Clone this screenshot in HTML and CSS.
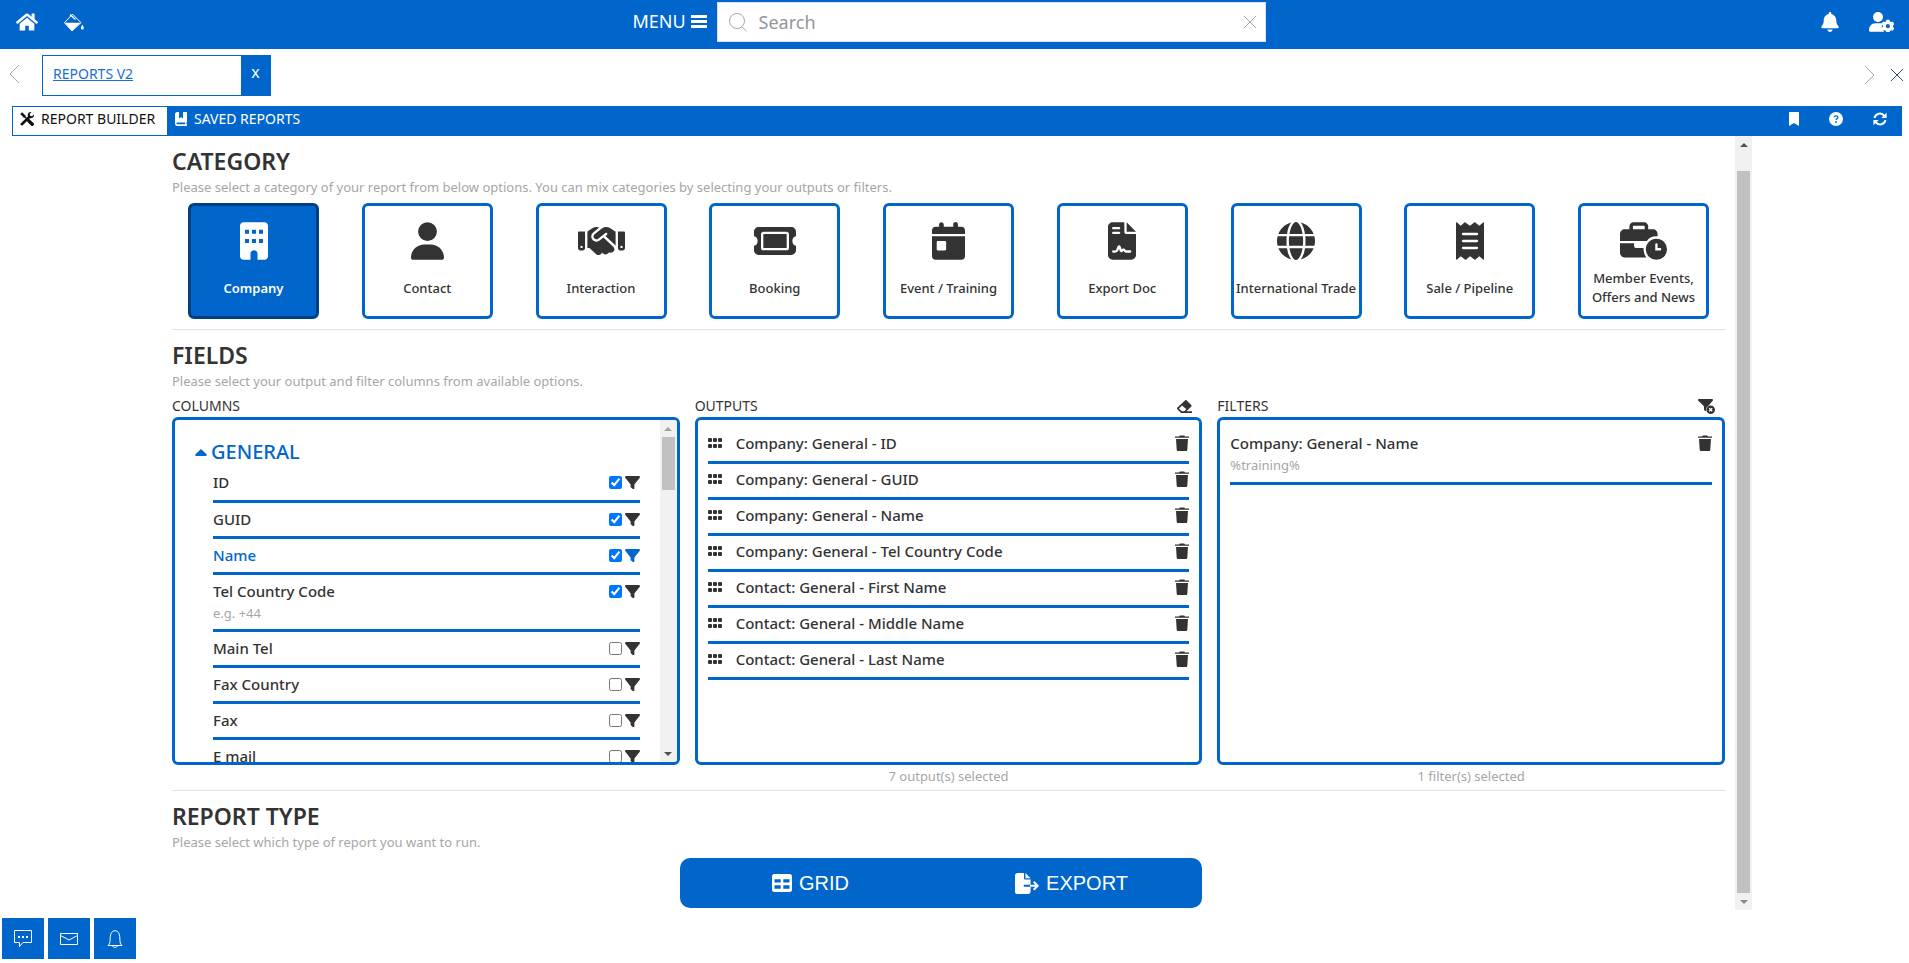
FILE: index.html
```html
<!DOCTYPE html>
<html lang="en">
<head>
<meta charset="utf-8">
<title>Reports V2</title>
<link rel="stylesheet" href="styles.css">
</head>
<body>
<svg class="sprite" aria-hidden="true">
  <symbol id="i-filter" viewBox="0 0 512 512"><path d="M3.9 54.9C10.5 40.9 24.5 32 40 32H472c15.500 0 29.500 8.900 36.100 22.900s4.600 30.500-5.200 42.500L320 320.900V448c0 12.100-6.800 23.200-17.700 28.600s-23.800 4.300-33.500-3l-64-48c-8.100-6-12.800-15.500-12.800-25.600V320.900L9 97.300C-.7 85.400-2.800 68.800 3.900 54.900z"/></symbol>
  <symbol id="i-trash" viewBox="0 0 14 16"><path d="M0 1.500h4L4.800.4h4.400L10 1.500h4v1.300H0zM1 4h12l-.7 10.700c-.1.800-.6 1.300-1.300 1.300H3c-.7 0-1.200-.5-1.300-1.300z"/></symbol>
  <symbol id="i-grip" viewBox="0 0 14 10"><path d="M1 0h2a1 1 0 0 1 1 1v2a1 1 0 0 1-1 1H1a1 1 0 0 1-1-1V1a1 1 0 0 1 1-1zM6 0h2a1 1 0 0 1 1 1v2a1 1 0 0 1-1 1H6a1 1 0 0 1-1-1V1a1 1 0 0 1 1-1zM11 0h2a1 1 0 0 1 1 1v2a1 1 0 0 1-1 1h-2a1 1 0 0 1-1-1V1a1 1 0 0 1 1-1zM1 6h2a1 1 0 0 1 1 1v2a1 1 0 0 1-1 1H1a1 1 0 0 1-1-1V7a1 1 0 0 1 1-1zM6 6h2a1 1 0 0 1 1 1v2a1 1 0 0 1-1 1H6a1 1 0 0 1-1-1V7a1 1 0 0 1 1-1zM11 6h2a1 1 0 0 1 1 1v2a1 1 0 0 1-1 1h-2a1 1 0 0 1-1-1V7a1 1 0 0 1 1-1z"/></symbol>
  <symbol id="i-bell" viewBox="0 0 448 512"><path d="M224 0c-17.700 0-32 14.300-32 32V51.200C119 66 64 130.600 64 208v18.800c0 47-17.300 92.400-48.500 127.600l-7.400 8.300c-8.400 9.400-10.400 22.900-5.300 34.400S19.400 416 32 416H416c12.600 0 24-7.400 29.200-18.900s3.100-25-5.300-34.400l-7.400-8.300C401.300 319.200 384 273.900 384 226.800V208c0-77.400-55-142-128-156.800V32c0-17.700-14.300-32-32-32zm45.300 493.300c12-12 18.700-28.300 18.700-45.300H160c0 17 6.700 33.300 18.700 45.300s28.300 18.700 45.300 18.700s33.300-6.700 45.300-18.700z"/></symbol>
</svg>

<header class="topbar">
  <div class="topbar-group">
    <button class="icon-btn" aria-label="Home"><svg width="22" height="20" viewBox="0 0 576 512"><path d="M280.370 148.260L96 300.110V464a16 16 0 0 0 16 16l112.060-.29a16 16 0 0 0 15.920-16V368a16 16 0 0 1 16-16h64a16 16 0 0 1 16 16v95.640a16 16 0 0 0 16 16.050L464 480a16 16 0 0 0 16-16V300L295.670 148.260a12.190 12.190 0 0 0-15.300 0zM571.600 251.470L488 182.560V44.050a12 12 0 0 0-12-12h-56a12 12 0 0 0-12 12v72.610L318.470 43a48 48 0 0 0-61 0L4.340 251.470a12 12 0 0 0-1.600 16.900l25.500 31A12 12 0 0 0 45.150 301l235.220-193.740a12.190 12.190 0 0 1 15.300 0L530.900 301a12 12 0 0 0 16.900-1.600l25.500-31a12 12 0 0 0-1.700-16.930z"/></svg></button>
    <button class="icon-btn" aria-label="Theme colours"><svg width="20" height="19" viewBox="0 0 20 19"><path d="M8.500 1.200 17 9.700 8 18 .4 9.700z" fill="none" stroke="#fff" stroke-width="1"/><path d="M.8 9.700h15.700L8 17.800zM18.300 11.500c1 1.800 1.500 2.800 1.500 3.600a1.500 1.500 0 0 1-3 0c0-.8.500-1.800 1.500-3.600z"/><path d="M6 1.500l5.500 5" fill="none" stroke="#fff" stroke-width="1.300"/></svg></button>
  </div>
  <div class="topbar-center">
    <button class="menu-btn">MENU <svg width="16" height="15" viewBox="0 0 16 15"><path d="M0 1h16v3H0zM0 6h16v3H0zM0 11h16v3H0z"/></svg></button>
    <div class="search">
      <svg width="20" height="20" viewBox="0 0 20 20"><circle cx="9" cy="9" r="7.500"/><path d="M14 15l4.500 4"/></svg>
      <input type="text" placeholder="Search" aria-label="Search">
      <button class="clear-btn" aria-label="Clear search"><svg width="14" height="14" viewBox="0 0 14 14"><path d="M1 1l12 12M13 1L1 13"/></svg></button>
    </div>
  </div>
  <div class="topbar-group end">
    <button class="icon-btn" aria-label="Notifications"><svg width="18" height="20"><use href="#i-bell"/></svg></button>
    <button class="icon-btn last" aria-label="User settings"><svg width="25" height="20" viewBox="0 0 25 20"><circle cx="9" cy="5" r="5"/><path d="M0 18c0-4 2.800-6.800 6.500-6.800h5c.8 0 1.500.1 2 .4-.8 1.400-1 4-.2 5.500.4 1 1.100 1.900 2 2.700H1.500C.6 19.800 0 19 0 18z"/><path fill-rule="evenodd" d="M17.400 7.700h3l.5 1.700 1.200.7 1.700-.5 1.500 2.600-1.300 1.300v1.400l1.300 1.300-1.500 2.600-1.700-.5-1.200.7-.5 1.400h-3l-.5-1.400-1.200-.7-1.700.5-1.500-2.600 1.300-1.300v-1.400l-1.300-1.300 1.500-2.600 1.700.5 1.200-.7zm1.500 4.400a2.100 2.100 0 1 0 0 4.200 2.100 2.100 0 0 0 0-4.200z"/></svg></button>
  </div>
</header>

<nav class="tabstrip" aria-label="Open pages">
  <button class="plain" aria-label="Previous tab"><svg class="line" width="12" height="20" viewBox="0 0 12 20"><path d="M11 1L2 10l9 9"/></svg></button>
  <div class="page-tab"><a href="#">REPORTS V2</a><button aria-label="Close tab">X</button></div>
  <div class="tabstrip-end">
    <button class="plain" aria-label="Next tab"><svg class="line" width="12" height="20" viewBox="0 0 12 20"><path d="M1 1l9 9-9 9"/></svg></button>
    <button class="plain" aria-label="Close all"><svg class="line dark" width="14" height="14" viewBox="0 0 14 14"><path d="M1 1l12 12M13 1L1 13"/></svg></button>
  </div>
</nav>

<div class="toolbar">
  <button class="tool-tab active"><svg width="14" height="14" viewBox="0 0 14 14"><path d="M1.200 1.200 5 5" stroke="#111" stroke-width="2.600"/><path d="M4 4l4.500 4.500" stroke="#111" stroke-width="1.400"/><path d="M8.600 8.600l3.600 3.600" stroke="#111" stroke-width="3.400" stroke-linecap="round"/><path d="M1.800 12.200 9.500 4.700" stroke="#111" stroke-width="2.600" stroke-linecap="round"/><path d="M11.500 0 9.700 2l.4 1.900 1.900.4L14 2.500c.3 2.500-1.700 4.200-4 3.700L7.800 4C7.300 1.800 9-.3 11.500 0z"/></svg>REPORT BUILDER</button>
  <button class="tool-tab"><svg width="12" height="14" viewBox="0 0 12 14"><path fill-rule="evenodd" d="M2.200 0H4v6.500l2-1.400 2 1.400V0h3.200c.5 0 .8.300.8.800v9c0 .4-.2.600-.5.800v1.700c.4.100.5.300.5.700v.3c0 .4-.3.700-.7.700H2.200A2.200 2.200 0 0 1 0 11.800V2.200C0 1 1 0 2.200 0zm0 10.600c-1 0-1 1.700 0 1.700h7.900v-1.700z"/></svg>SAVED REPORTS</button>
  <div class="toolbar-end">
    <button class="icon-btn" aria-label="Bookmark"><svg width="10" height="14" viewBox="0 0 10 14"><path d="M0 1c0-.6.400-1 1-1h8c.6 0 1 .4 1 1v13l-5-3-5 3z"/></svg></button>
    <button class="icon-btn" aria-label="Help"><svg width="14" height="14" viewBox="0 0 14 14"><circle cx="7" cy="7" r="7"/><path d="M5.200 5.300c0-2 3.700-2 3.700.1 0 1.200-1.800 1.200-1.800 2.500" fill="none" stroke="#0066cc" stroke-width="1.300"/><circle cx="7" cy="10" r=".9" fill="#0066cc"/></svg></button>
    <button class="icon-btn" aria-label="Refresh"><svg width="14" height="14" viewBox="0 0 14 14"><path d="M1.500 6A5.500 5.500 0 0 1 11.300 3.800M12.500 8A5.500 5.500 0 0 1 2.700 10.200" fill="none" stroke="#fff" stroke-width="2"/><path d="M13.600.8v5.300H8.300zM.4 13.200V7.900h5.300z"/></svg></button>
  </div>
</div>

<div class="scroller">
<main class="content">
  <section class="block">
    <h2>CATEGORY</h2>
    <p class="hint">Please select a category of your report from below options. You can mix categories by selecting your outputs or filters.</p>
    <div class="cards">
      <button class="card selected"><svg width="28" height="38" viewBox="0 0 384 512"><path fill-rule="evenodd" d="M48 0h288c26 0 48 22 48 48v416c0 26-22 48-48 48h-96v-80c0-27-21-48-48-48s-48 21-48 48v80H48c-26 0-48-22-48-48V48C0 22 22 0 48 0zM68 102v54h56v-54zm96 0v54h56v-54zm96 0v54h56v-54zM68 228v54h56v-54zm96 0v54h56v-54zm96 0v54h56v-54z"/></svg><span>Company</span></button>
      <button class="card"><svg width="33" height="38" viewBox="0 0 448 512"><path d="M224 256A128 128 0 1 0 224 0a128 128 0 1 0 0 256zm-45.700 48C79.800 304 0 383.800 0 482.300C0 498.700 13.300 512 29.700 512H418.300c16.400 0 29.700-13.300 29.700-29.700C448 383.800 368.200 304 269.700 304H178.300z"/></svg><span>Contact</span></button>
      <button class="card"><svg width="47" height="38" viewBox="0 0 640 512"><path d="M323.400 85.200l-96.800 78.400c-16.100 13-19.200 36.400-7 53.100c12.900 17.800 38 21.300 55.300 7.800l99.300-77.200c7-5.400 17-4.200 22.500 2.800s4.200 17-2.800 22.500l-20.900 16.200L512 316.800V128h-.7l-3.900-2.500L434.800 79c-15.300-9.800-33.200-15-51.400-15c-21.800 0-43 7.500-60 21.200zm22.800 124.400l-51.700 40.200C263 274.300 217.300 268 193.700 235.600c-22.200-30.500-16.600-73.100 12.700-96.800l83.200-67.300c-11.600-4.900-24.100-7.400-36.800-7.400C234 64 215.700 69.600 200 80l-72 48V352h28.200l91.400 83.400c19.600 17.900 49.900 16.500 67.800-3.100c5.500-6.100 9.200-13.200 11.100-20.600l17 15.600c19.500 17.900 49.900 16.600 67.800-2.900c4.500-4.900 7.800-10.600 9.900-16.500c19.400 13 45.800 10.300 62.100-7.500c17.900-19.500 16.600-49.900-2.900-67.800l-134.200-123zM16 128c-8.800 0-16 7.200-16 16V352c0 17.700 14.300 32 32 32H64c17.700 0 32-14.300 32-32V128H16zM48 320a16 16 0 1 1 0 32 16 16 0 1 1 0-32zM544 128V352c0 17.700 14.300 32 32 32h32c17.700 0 32-14.300 32-32V144c0-8.800-7.200-16-16-16H544zm32 208a16 16 0 1 1 32 0 16 16 0 1 1 -32 0z"/></svg><span>Interaction</span></button>
      <button class="card"><svg width="42" height="38" viewBox="0 0 576 512"><path fill-rule="evenodd" d="M64 64h448c35 0 64 29 64 64v64c-66 0-66 128 0 128v64c0 35-29 64-64 64H64c-35 0-64-29-64-64v-64c66 0 66-128 0-128v-64c0-35 29-64 64-64zm64 64c-18 0-32 14-32 32v192c0 18 14 32 32 32h320c18 0 32-14 32-32V160c0-18-14-32-32-32zm0 32h320v192H128z"/></svg><span>Booking</span></button>
      <button class="card"><svg width="33" height="38" viewBox="0 0 448 512"><path fill-rule="evenodd" d="M128 0c18 0 32 14 32 32v32h128V32c0-43 64-43 64 0v32h48c27 0 48 21 48 48v48H0v-48c0-27 21-48 48-48h48V32c0-18 14-32 32-32zM0 192h448v272c0 27-21 48-48 48H48c-27 0-48-21-48-48zm80 64c-9 0-16 7-16 16v96c0 9 7 16 16 16h96c9 0 16-7 16-16v-96c0-9-7-16-16-16z"/></svg><span>Event / Training</span></button>
      <button class="card"><svg width="28" height="38" viewBox="0 0 384 512"><path d="M64 0h160v128c0 18 14 32 32 32h128v288c0 35-29 64-64 64H64c-35 0-64-29-64-64V64C0 29 29 0 64 0zm192 0 128 128H256z"/><path d="M72 80h80M72 144h80M72 400c54 6 58-20 74-66 10-8 14 0 22 28 6 34 12 38 24 26 14-18 30-22 40 6 3 6 8 6 16 6h56" fill="none" stroke="#fff" stroke-width="32" stroke-linecap="round"/></svg><span>Export Doc</span></button>
      <button class="card"><svg width="38" height="38" viewBox="0 0 512 512"><path d="M352 256c0 22.200-1.200 43.600-3.300 64H163.300c-2.200-20.400-3.300-41.800-3.300-64s1.200-43.600 3.300-64H348.700c2.200 20.400 3.300 41.800 3.300 64zm28.800-64H503.900c5.300 20.500 8.100 41.900 8.100 64s-2.800 43.500-8.100 64H380.800c2.100-20.600 3.200-42 3.200-64s-1.100-43.400-3.200-64zm112.600-32H376.700c-10-63.900-29.800-117.400-55.300-151.600c78.300 20.700 142 77.500 171.900 151.600zm-149.100 0H167.700c6.100-36.400 15.500-68.600 27-94.700c10.500-23.600 22.200-40.700 33.500-51.500C239.400 3.200 248.700 0 256 0s16.600 3.200 27.800 13.800c11.300 10.800 23 27.900 33.500 51.500c11.600 26 20.900 58.200 27 94.700zm-209 0H18.600C48.600 85.900 112.200 29.100 190.600 8.400C165.100 42.600 145.300 96.100 135.300 160zM8.100 192H131.200c-2.100 20.600-3.200 42-3.200 64s1.100 43.400 3.200 64H8.100C2.800 299.500 0 278.100 0 256s2.800-43.500 8.100-64zM194.700 446.600c-11.600-26-20.900-58.200-27-94.600H344.300c-6.100 36.400-15.500 68.600-27 94.600c-10.500 23.600-22.200 40.700-33.500 51.500C272.600 508.800 263.300 512 256 512s-16.600-3.200-27.800-13.800c-11.300-10.800-23-27.900-33.500-51.500zM135.300 352c10 63.900 29.800 117.400 55.300 151.600C112.200 482.900 48.600 426.100 18.600 352H135.300zm358.100 0c-30 74.100-93.600 130.900-171.900 151.600c25.500-34.200 45.200-87.700 55.300-151.600H493.400z"/></svg><span>International Trade</span></button>
      <button class="card"><svg width="28" height="38" viewBox="0 0 384 512"><path d="M0 8c0-8 8-10 14-5l50 43 48-41c6-6 14-6 20 0l60 41 56-43c5-4 11-4 16 0l56 43L372 3c6-5 12-3 12 5v496c0 8-6 10-12 5l-52-43-52 43c-5 4-11 4-16 0l-60-43-52 43c-5 4-12 4-17 0l-59-43-50 43c-6 5-14 3-14-5z"/><path d="M96 160h192M96 256h192M96 352h192" stroke="#fff" stroke-width="32" stroke-linecap="round"/></svg><span>Sale / Pipeline</span></button>
      <button class="card"><svg width="47" height="38" viewBox="0 0 640 512"><path fill-rule="evenodd" d="M184 0h144c31 0 56 25 56 56v40h64c35 0 64 29 64 64v33c-66-8-120 20-146 63H0v-96c0-35 29-64 64-64h64V56c0-31 25-56 56-56zm0 48c-5 0-8 3-8 8v40h160V56c0-5-3-8-8-8z"/><path d="M0 288h192v32c0 18 14 32 32 32h96c0 47 10 90 38 128H64c-35 0-64-29-64-64z"/><circle cx="496" cy="368" r="144"/><path d="M496 304v64h50" fill="none" stroke="#fff" stroke-width="32" stroke-linecap="round"/></svg><span>Member Events, Offers and News</span></button>
    </div>
  </section>

  <section class="block">
    <h2>FIELDS</h2>
    <p class="hint">Please select your output and filter columns from available options.</p>
    <div class="panels">
      <div class="panel">
        <div class="panel-head"><h3>COLUMNS</h3></div>
        <div class="box with-scroll">
          <div class="columns-list">
            <button class="group-title"><svg width="12" height="7" viewBox="0 0 12 7"><path d="M6 0l5.500 5.300c.5.700.3 1.700-.8 1.700H1.300C.2 7 0 6 .5 5.300z"/></svg>GENERAL</button>
            <ul>
              <li><label for="c1">ID</label><input type="checkbox" id="c1" checked><button class="plain" aria-label="Filter ID"><svg width="15" height="15"><use href="#i-filter"/></svg></button></li>
              <li><label for="c2">GUID</label><input type="checkbox" id="c2" checked><button class="plain" aria-label="Filter GUID"><svg width="15" height="15"><use href="#i-filter"/></svg></button></li>
              <li class="on"><label for="c3">Name</label><input type="checkbox" id="c3" checked><button class="plain" aria-label="Filter Name"><svg width="15" height="15"><use href="#i-filter"/></svg></button></li>
              <li><label for="c4">Tel Country Code</label><input type="checkbox" id="c4" checked><button class="plain" aria-label="Filter Tel Country Code"><svg width="15" height="15"><use href="#i-filter"/></svg></button><small>e.g. +44</small></li>
              <li><label for="c5">Main Tel</label><input type="checkbox" id="c5"><button class="plain" aria-label="Filter Main Tel"><svg width="15" height="15"><use href="#i-filter"/></svg></button></li>
              <li><label for="c6">Fax Country</label><input type="checkbox" id="c6"><button class="plain" aria-label="Filter Fax Country"><svg width="15" height="15"><use href="#i-filter"/></svg></button></li>
              <li><label for="c7">Fax</label><input type="checkbox" id="c7"><button class="plain" aria-label="Filter Fax"><svg width="15" height="15"><use href="#i-filter"/></svg></button></li>
              <li><label for="c8">E mail</label><input type="checkbox" id="c8"><button class="plain" aria-label="Filter E mail"><svg width="15" height="15"><use href="#i-filter"/></svg></button></li>
            </ul>
          </div>
          <div class="scrollbar small" aria-hidden="true"><i class="arrow up faded"></i><i class="thumb"></i><i class="arrow down"></i></div>
        </div>
      </div>
      <div class="panel">
        <div class="panel-head"><h3>OUTPUTS</h3><button class="plain" aria-label="Clear outputs"><svg width="15" height="13" viewBox="0 0 15 13"><path fill-rule="evenodd" d="M8 .4c.5-.5 1.200-.5 1.700 0l4.500 4.500c.5.500.5 1.200 0 1.700L9.500 11.200H15V13H4L.4 9.300c-.5-.5-.5-1.200 0-1.700zM5 5.500l-3 2.900 2.700 2.800h2.500l2.200-2z"/></svg></button></div>
        <div class="box">
          <ul class="picked">
            <li><svg width="14" height="10"><use href="#i-grip"/></svg><span>Company: General - ID</span><button class="plain" aria-label="Remove"><svg width="14" height="16"><use href="#i-trash"/></svg></button></li>
            <li><svg width="14" height="10"><use href="#i-grip"/></svg><span>Company: General - GUID</span><button class="plain" aria-label="Remove"><svg width="14" height="16"><use href="#i-trash"/></svg></button></li>
            <li><svg width="14" height="10"><use href="#i-grip"/></svg><span>Company: General - Name</span><button class="plain" aria-label="Remove"><svg width="14" height="16"><use href="#i-trash"/></svg></button></li>
            <li><svg width="14" height="10"><use href="#i-grip"/></svg><span>Company: General - Tel Country Code</span><button class="plain" aria-label="Remove"><svg width="14" height="16"><use href="#i-trash"/></svg></button></li>
            <li><svg width="14" height="10"><use href="#i-grip"/></svg><span>Contact: General - First Name</span><button class="plain" aria-label="Remove"><svg width="14" height="16"><use href="#i-trash"/></svg></button></li>
            <li><svg width="14" height="10"><use href="#i-grip"/></svg><span>Contact: General - Middle Name</span><button class="plain" aria-label="Remove"><svg width="14" height="16"><use href="#i-trash"/></svg></button></li>
            <li><svg width="14" height="10"><use href="#i-grip"/></svg><span>Contact: General - Last Name</span><button class="plain" aria-label="Remove"><svg width="14" height="16"><use href="#i-trash"/></svg></button></li>
          </ul>
        </div>
        <p class="count">7 output(s) selected</p>
      </div>
      <div class="panel">
        <div class="panel-head"><h3>FILTERS</h3><button class="plain" aria-label="Clear filters"><svg width="17" height="15" viewBox="0 0 17 15"><path d="M1 0h13c1 0 1.300 1 .7 1.700L10.500 6.800C8.500 7.800 7.600 10 8.200 12.500L6 11V7.200L.3 1.700C-.3 1 0 0 1 0z"/><circle cx="12.700" cy="10.700" r="4.300"/><path d="M11.200 9.200l3 3M14.200 9.200l-3 3" stroke="#fff" stroke-width="1.300"/></svg></button></div>
        <div class="box">
          <ul class="picked">
            <li><span>Company: General - Name</span><button class="plain" aria-label="Remove"><svg width="14" height="16"><use href="#i-trash"/></svg></button><small>%training%</small></li>
          </ul>
        </div>
        <p class="count">1 filter(s) selected</p>
      </div>
    </div>
  </section>

  <section class="block">
    <h2>REPORT TYPE</h2>
    <p class="hint">Please select which type of report you want to run.</p>
    <div class="actions">
      <button><svg width="20" height="18" viewBox="0 0 20 18"><path fill-rule="evenodd" d="M2.500 0h15A2.500 2.500 0 0 1 20 2.500v13a2.500 2.500 0 0 1-2.500 2.500h-15A2.500 2.500 0 0 1 0 15.500v-13A2.500 2.500 0 0 1 2.500 0zm0 5.300v3.200h6.200V5.300zm8.800 0v3.200h6.200V5.300zm-8.800 5.900v3.500h6.200v-3.500zm8.800 0v3.500h6.200v-3.500z"/></svg>GRID</button>
      <button><svg width="24" height="21" viewBox="0 0 24 21"><path d="M2.600 0H9v5.200c0 .8.600 1.400 1.400 1.400h5.200v5.200H8.800v2h6.800v4.600c0 1.400-1.200 2.600-2.600 2.600H2.600A2.600 2.600 0 0 1 0 18.400V2.600C0 1.200 1.200 0 2.600 0zm7.800 0 5.200 5.300h-5.200z"/><path d="M15 12.800h7M18.700 8.800l4 4-4 4" fill="none" stroke="#fff" stroke-width="2"/></svg>EXPORT</button>
    </div>
  </section>
</main>
<div class="scrollbar" aria-hidden="true"><i class="arrow up"></i><i class="thumb"></i><i class="arrow down faded"></i></div>
</div>

<footer class="dock">
  <button aria-label="Chat"><svg width="18" height="18" viewBox="0 0 18 18"><path d="M.5.500h17v12H9l-3.500 4v-4h-5z"/><path d="M4 7h2M8 7h2M12 7h2" stroke-width="2"/></svg></button>
  <button aria-label="Mail"><svg width="18" height="12" viewBox="0 0 18 12"><path d="M.5.500h17v11H.500zM.5 2.500L9 7l8.500-4.500"/></svg></button>
  <button aria-label="Alerts"><svg width="16" height="18" viewBox="0 0 16 18"><path d="M1 15.500c2-1.500 2-4 2.200-7.500C3.400 3.500 5 .7 8 .7s4.600 2.800 4.800 7.300c.2 3.500.2 6 2.200 7.500zM5.500 15.500c.3 2.600 4.700 2.600 5 0"/></svg></button>
</footer>
</body>
</html>
```
FILE: styles.css
```css
:root {
  --blue: #0066cc;
  --ink: #333;
  --muted: #a6a6a6;
  --sans: "Noto Sans", "Open Sans", sans-serif;
}

* { box-sizing: border-box; }

body {
  margin: 0;
  min-height: 100vh;
  display: flex;
  flex-direction: column;
  background: #fff;
  color: var(--ink);
  font-family: var(--sans);
  font-size: 13px;
  line-height: 18px;
}

.sprite { display: none; }
h2, h3, p, ul { margin: 0; padding: 0; }
ul { list-style: none; }
button { font: inherit; color: inherit; border: 0; padding: 0; background: none; cursor: pointer; }
svg { display: block; fill: currentColor; flex: none; }

/* Top bar */
.topbar {
  display: grid;
  grid-template-columns: 1fr auto 1fr;
  height: 49px;
  padding: 0 15px 0 4px;
  background: var(--blue);
  color: #fff;
}
.topbar-group { display: flex; align-items: center; padding-bottom: 5px; }
.topbar-group .icon-btn { padding: 0 12px; }
.topbar-group .icon-btn + .icon-btn { padding-left: 14px; }
.topbar-group.end { justify-content: flex-end; gap: 4px; }
.topbar-group.end .last { padding-right: 0; }
.topbar-center { display: flex; align-items: flex-start; gap: 10px; padding-top: 2px; }
.menu-btn { display: flex; align-items: center; gap: 5px; height: 38px; font-size: 18px; }
.search {
  display: flex;
  align-items: center;
  width: 549px;
  height: 40px;
  padding: 0 8px 0 10px;
  border: 1px solid #dfe1ec;
  background: #fff;
}
.search svg { fill: none; stroke: #a6a6ae; stroke-width: 1; }
.search input {
  flex: 1;
  min-width: 0;
  border: 0;
  padding: 0 11px;
  outline: 0;
  background: none;
  font: 18px/24px var(--sans);
}
.search input::placeholder { color: #95959d; opacity: 1; }

/* Page tabs */
.tabstrip { display: flex; align-items: center; height: 57px; padding: 0 5px 7px 8px; }
.tabstrip .line { fill: none; stroke: #a9a9b5; stroke-width: 1; }
.tabstrip .line.dark { stroke: #33507c; }
.page-tab {
  display: flex;
  width: 229px;
  height: 41px;
  margin: 2px 0 0 22px;
  border: 1px solid var(--blue);
}
.page-tab a { flex: 1; padding: 9px 10px; color: #1a70cf; font-size: 14px; }
.page-tab button { width: 29px; padding-bottom: 4px; background: var(--blue); color: #fff; font-weight: 500; }
.tabstrip-end { display: flex; align-items: center; gap: 14px; margin: 2px 0 0 auto; }

/* Section toolbar */
.toolbar {
  display: flex;
  height: 30px;
  margin: 0 7px 0 12px;
  background: var(--blue);
  color: #fff;
  font-size: 14px;
}
.tool-tab { display: flex; align-items: center; gap: 7px; padding: 0 7px 4px; }
.tool-tab.active { width: 156px; background: #fff; color: #111; border: 1px solid var(--blue); }
.toolbar-end { display: flex; align-items: center; gap: 30px; margin-left: auto; padding: 0 15px 4px; }

/* Scrolling content */
.scroller { display: flex; margin: 0 157px; }
.content { flex: 1; min-width: 0; padding: 0 10px 0 15px; }
.block + .block { border-top: 1px solid #e3e3e3; }
.block h2 { padding-top: 10px; font-size: 23px; line-height: 30px; font-weight: 600; }
.hint { padding-top: 2px; color: var(--muted); }

.scrollbar {
  display: flex;
  flex-direction: column;
  align-items: center;
  width: 17px;
  background: #f1f1f1;
}
.scrollbar .thumb { flex: 1; width: 13px; margin-top: 18px; background: #c1c1c1; }
.scrollbar.small .thumb { flex: none; height: 53px; margin: 0 0 auto; }
.arrow { display: flex; align-items: center; justify-content: center; width: 17px; height: 17px; }
.arrow::before { content: ""; border: 4px solid transparent; border-top-width: 0; border-bottom-color: #505050; }
.arrow.down::before { border-width: 4px 4px 0; border-color: #505050 transparent transparent; }
.arrow.up.faded::before { border-bottom-color: #a3a3a3; }
.arrow.down.faded::before { border-top-color: #8a8a8a; }

/* Category cards */
.cards { display: flex; justify-content: space-between; padding: 7px 16px 10px; }
.card {
  display: flex;
  flex-direction: column;
  align-items: center;
  width: 131px;
  height: 116px;
  padding-top: 16px;
  border: 3px solid var(--blue);
  border-radius: 6px;
  font-weight: 500;
  background: #fff;
}
.card span { display: grid; align-items: center; height: 56px; width: 121px; line-height: 19px; }
.card.selected { background: var(--blue); border-color: #003f80; color: #fff; font-weight: 600; }

/* Field panels */
.panels { display: grid; grid-template-columns: repeat(3, 1fr); gap: 15px; padding: 6px 0 5px; }
.panel-head { display: flex; align-items: center; justify-content: space-between; height: 20px; margin-bottom: 1px; padding-right: 10px; }
.panel h3 { font-size: 14px; font-weight: 400; }
.box { height: 348px; border: 3px solid var(--blue); border-radius: 6px; overflow: hidden; }
.with-scroll { display: flex; justify-content: space-between; }
.columns-list { flex: 1; padding: 20px 20px 0; }
.group-title { display: flex; align-items: center; gap: 4px; color: var(--blue); font-size: 20px; line-height: 24px; font-weight: 500; }
.columns-list ul { padding-left: 18px; }
.columns-list li {
  display: grid;
  grid-template-columns: 1fr auto auto;
  align-items: center;
  column-gap: 3px;
  padding: 6px 0 7px;
  border-bottom: 3px solid var(--blue);
}
.columns-list li:first-child { padding: 8px 0; }
.columns-list input { margin: 0; width: 13px; height: 13px; accent-color: #0075ff; }
.columns-list label { font-size: 15px; line-height: 20px; font-weight: 500; }
li.on { color: var(--blue); }
li small { grid-column: 1 / -1; padding-top: 3px; font-size: 13px; line-height: 18px; color: var(--muted); }

.picked { padding: 8px 10px; }
.picked li {
  display: grid;
  grid-template-columns: auto 1fr auto;
  align-items: center;
  padding: 5px 0 8px;
  border-bottom: 3px solid var(--blue);
  font-size: 15px;
  line-height: 20px;
  font-weight: 500;
}
.picked li > svg + span { padding-left: 14px; }
.picked li > span:first-child { grid-column: 1 / 3; }
.picked small { font-weight: 400; }
.count { padding-top: 2px; text-align: center; color: var(--muted); }

/* Run buttons */
.actions { display: flex; justify-content: center; padding: 7px 15px 2px 0; }
.actions button {
  display: flex;
  align-items: center;
  justify-content: center;
  gap: 7px;
  width: 261px;
  height: 50px;
  background: var(--blue);
  color: #fff;
  font: 20px/24px "Liberation Sans", Arial, sans-serif;
}
.actions button:first-child { border-radius: 10px 0 0 10px; }
.actions button:last-child { border-radius: 0 10px 10px 0; }

/* Dock */
.dock { display: flex; gap: 4px; padding: 8px 2px 0; }
.dock button { display: flex; align-items: center; justify-content: center; width: 42px; height: 41px; background: var(--blue); color: #fff; }
.dock svg { fill: none; stroke: #fff; stroke-width: 1; }
```
